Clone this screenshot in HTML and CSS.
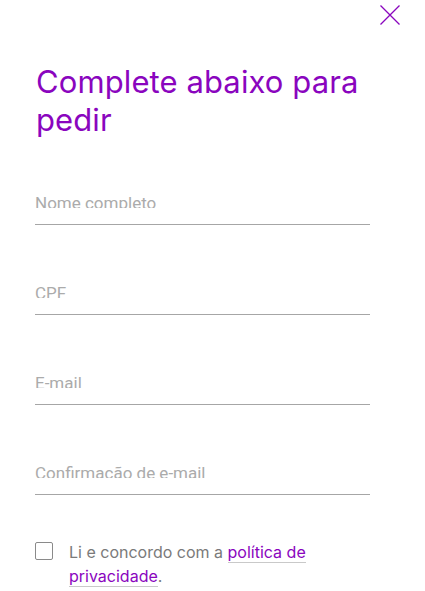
FILE: index.html
```html
<!DOCTYPE html>
<html lang="pt-BR">
<head>
<meta charset="utf-8">
<link rel="stylesheet" href="styles.css">
</head>
<body>
<div class="page">
  <div class="topbar">
    <button class="close" aria-label="Fechar">
      <svg width="20" height="20" viewBox="0 0 20 20"><path d="M0.5 0.5 L19.5 19.5 M19.5 0.5 L0.5 19.5" stroke="#8a05be" stroke-width="1.3" fill="none"/></svg>
    </button>
  </div>
  <h1 class="title">Complete abaixo para pedir</h1>
  <form class="form">
    <div class="field"><div class="label-clip"><span class="label">Nome completo</span></div></div>
    <div class="field"><div class="label-clip"><span class="label">CPF</span></div></div>
    <div class="field"><div class="label-clip"><span class="label">E-mail</span></div></div>
    <div class="field"><div class="label-clip"><span class="label">Confirmação de e-mail</span></div></div>
    <label class="agree">
      <span class="box"></span>
      <span class="agree-text">Li e concordo com a <a class="link" href="#">política de privacidade</a>.</span>
    </label>
  </form>
</div>
</body>
</html>
```
FILE: styles.css
```css
* { box-sizing: border-box; }
html, body { margin: 0; padding: 0; background: #fff; }
.page {
  width: 425px;
  height: 591px;
  overflow: hidden;
  font-family: Inter, "Liberation Sans", sans-serif;
}
.topbar {
  display: flex;
  justify-content: flex-end;
  padding: 5px 25px 0 0;
  height: 63px;
}
.close {
  width: 20px;
  height: 20px;
  padding: 0;
  border: 0;
  background: none;
  display: block;
}
.close svg { display: block; }
.title {
  margin: 0;
  padding: 0 40px 0 36px;
  font-size: 31px;
  line-height: 38px;
  font-weight: 400;
  color: #8a05be;
  letter-spacing: 0.1px;
}
.form {
  display: flex;
  flex-direction: column;
  padding: 0 55px 0 35px;
}
.field {
  height: 90px;
  display: flex;
  flex-direction: column;
  justify-content: flex-end;
  border-bottom: 1px solid #a6a6a6;
  padding-bottom: 16px;
}
.field:first-child { height: 86px; }
.label-clip {
  height: 13px;
  overflow: hidden;
  display: flex;
  align-items: flex-start;
}
.label {
  font-family: Roboto, "Liberation Sans", sans-serif;
  font-size: 17px;
  line-height: 17px;
  color: #ababab;
  white-space: nowrap;
}
.agree {
  display: flex;
  align-items: flex-start;
  gap: 16px;
  margin-top: 46px;
}
.box {
  flex: none;
  width: 18px;
  height: 18px;
  border: 1.5px solid #8a8a8a;
  border-radius: 2px;
  margin-top: 1px;
}
.agree-text {
  font-size: 16px;
  line-height: 24px;
  color: #7a7a7a;
  width: 260px;
  margin-top: -1px;
}
.link {
  color: #8a05be;
  text-decoration: none;
  border-bottom: 1px solid #c9c9c9;
}
```
